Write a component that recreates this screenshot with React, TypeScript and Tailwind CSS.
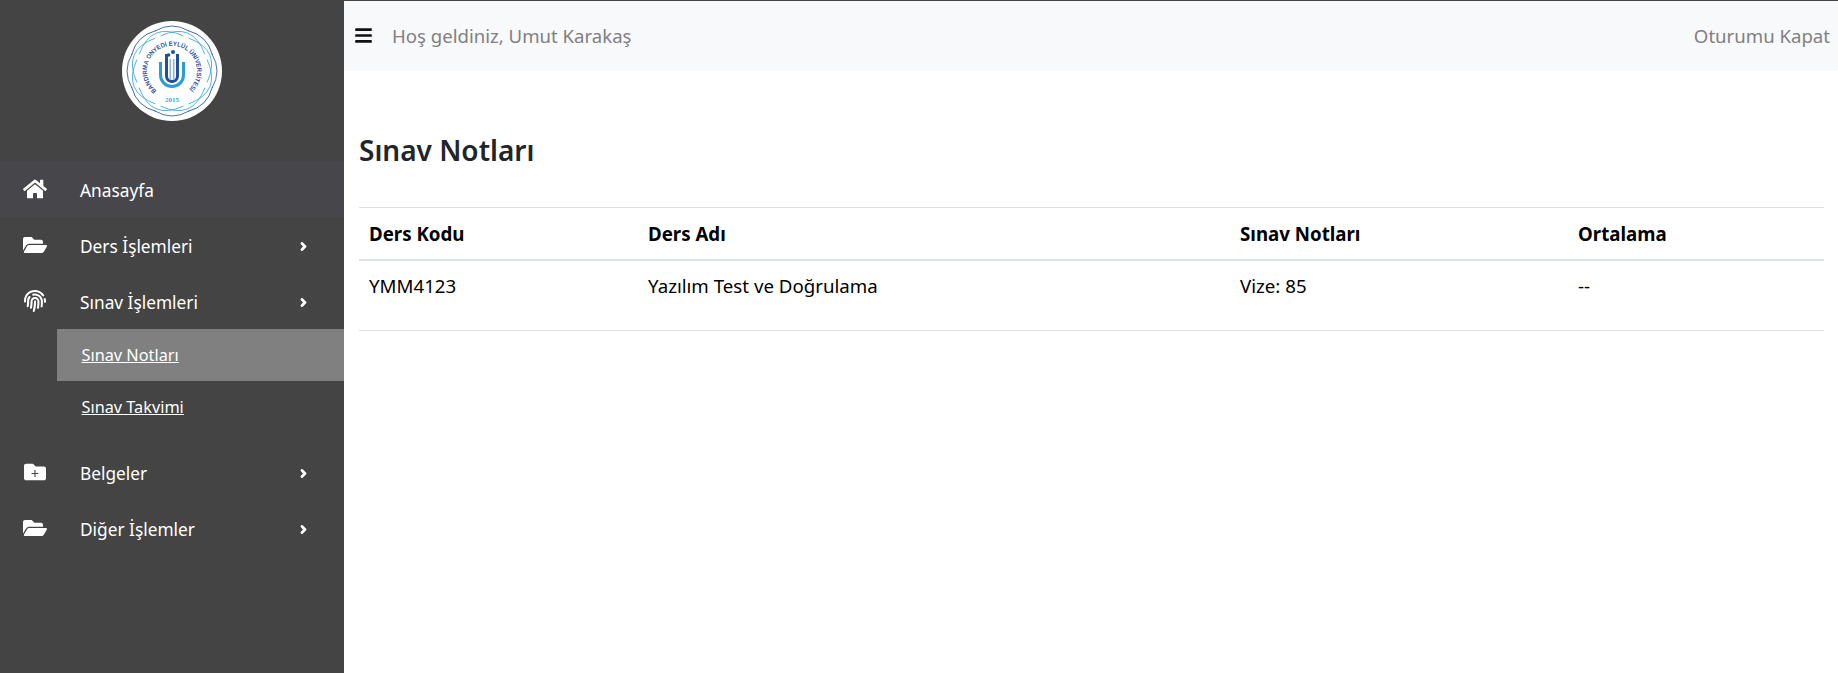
import React from 'react';
import { FaHome, FaFolderOpen, FaFingerprint, FaChevronRight, FaBars } from 'react-icons/fa';

const Logo = () => {
  const petals = Array.from({ length: 8 }, (_, i) => i * 45);
  return (
    <svg viewBox="0 0 100 100" className="h-[100px] w-[100px]">
      <defs>
        <path id="ring" d="M34.6 69.5 A25 25 0 1 1 65.4 69.5" />
      </defs>
      <circle cx="50" cy="50" r="50" fill="#fff" />
      {petals.map((a) => (
        <g key={a} fill="none">
          <path d="M33 10 Q50 0 67 10" stroke="#1f4e9c" strokeWidth="0.8" transform={`rotate(${a} 50 50)`} />
          <path d="M26 22 Q50 -4 74 22" stroke="#3fa9e0" strokeWidth="0.8" transform={`rotate(${a + 22.5} 50 50)`} />
        </g>
      ))}
      <text fontSize="6.4" fontWeight="700" fill="#1f4e9c" fontFamily="'Liberation Sans', sans-serif">
        <textPath href="#ring" textLength="121" lengthAdjust="spacingAndGlyphs">BANDIRMA ONYEDİ EYLÜL ÜNİVERSİTESİ</textPath>
      </text>
      <path d="M37 41 V54 A13 13 0 0 0 63 54 V41 H60 V54 A10 10 0 0 1 40 54 V41 Z" fill="#2b9bd8" />
      <path d="M43 33 V55 A7 7 0 0 0 57 55 V33 H54 V55 A4 4 0 0 1 46 55 V33 Z" fill="#1f4e9c" />
      <rect x="47.5" y="38" width="1.6" height="21" fill="#8fb4d8" />
      <rect x="50.9" y="38" width="1.6" height="21" fill="#8fb4d8" />
      <circle cx="46.5" cy="34" r="1.8" fill="#1f4e9c" />
      <circle cx="51" cy="31" r="2" fill="#1f4e9c" />
      <text x="50" y="81" textAnchor="middle" fontSize="7" fontWeight="700" fill="#3fa9e0" fontFamily="'Liberation Serif', serif">2015</text>
    </svg>
  );
};

// thinner plus than the react-icons folder-plus
const FolderPlus = () => (
  <svg viewBox="0 0 512 512" className="h-[22px] w-[22px]" fill="currentColor">
    <path d="M464 128H272l-64-64H48C21.49 64 0 85.49 0 112v288c0 26.51 21.49 48 48 48h416c26.51 0 48-21.49 48-48V176c0-26.51-21.49-48-48-48z" />
    <path d="M256 210v160M176 290h160" stroke="#444444" strokeWidth="26" />
  </svg>
);

const NavItem = ({ icon, label, arrow, active }: { icon: React.ReactNode; label: string; arrow?: boolean; active?: boolean }) => (
  <a className={`flex h-14 items-center text-white ${active ? 'bg-[#47474b]' : ''}`}>
    <span className="flex w-[80px] shrink-0 justify-center pr-[11px] text-[24px]">{icon}</span>
    <span className="flex-1 pt-[3px] text-[17.3px]">{label}</span>
    {arrow && <FaChevronRight className="mr-[36px] mt-[2px] text-[9px]" stroke="currentColor" strokeWidth={70} />}
  </a>
);

const SubItem = ({ label, active }: { label: string; active?: boolean }) => (
  <a className={`ml-[57px] flex h-[52px] items-center pl-[24.5px] text-[16.3px] text-white underline ${active ? 'bg-[#808080]' : ''}`}>
    {label}
  </a>
);

const App = () => {
  return (
    <div className="flex h-screen overflow-hidden bg-white font-['Noto_Sans',sans-serif]">
      {/* Sidebar */}
      <aside className="w-[344px] shrink-0 bg-[#444444]">
        <div className="flex h-[161px] justify-center pt-[21px]">
          <Logo />
        </div>
        <nav>
          <NavItem icon={<FaHome />} label="Anasayfa" active />
          <NavItem icon={<FaFolderOpen />} label="Ders İşlemleri" arrow />
          <NavItem icon={<FaFingerprint className="text-[22px]" />} label="Sınav İşlemleri" arrow />
          <SubItem label="Sınav Notları" active />
          <SubItem label="Sınav Takvimi" />
          <div className="h-[11px]" />
          <NavItem icon={<FolderPlus />} label="Belgeler" arrow />
          <NavItem icon={<FaFolderOpen />} label="Diğer İşlemler" arrow />
        </nav>
      </aside>

      {/* Main */}
      <main className="min-w-0 flex-1">
        <header className="flex h-[71px] items-center justify-between border-t border-[#444444] bg-[#f8f9fa] pl-[10px] pr-[8px] text-[18.6px] text-[#808080]">
          <div className="flex items-center">
            <FaBars className="text-[19px] text-[#111111]" />
            <span className="ml-[19px]">Hoş geldiniz, Umut Karakaş</span>
          </div>
          <span>Oturumu Kapat</span>
        </header>

        <div className="pl-[15px] pr-[14px]">
          <h2 className="mt-[58px] h-[78px] text-[28px] font-semibold text-[#212529]">Sınav Notları</h2>
          <table className="w-full table-fixed border-collapse text-left text-[18.7px] text-black">
            <thead>
              <tr className="h-[52px] border-y border-[#dee2e6] text-[18.7px]">
                <th className="w-[279px] px-[10px] pt-[2px] font-bold">Ders Kodu</th>
                <th className="w-[592px] px-[10px] pt-[2px] font-bold">Ders Adı</th>
                <th className="w-[338px] px-[10px] pt-[2px] font-bold">Sınav Notları</th>
                <th className="px-[10px] pt-[2px] font-bold">Ortalama</th>
              </tr>
            </thead>
            <tbody>
              <tr className="h-[71px] border-t-2 border-b border-t-[#dee2e6] border-b-[#dee2e6]">
                <td className="px-[10px] pb-[18px]">YMM4123</td>
                <td className="px-[10px] pb-[18px]">Yazılım Test ve Doğrulama</td>
                <td className="px-[10px] pb-[18px]">Vize: 85</td>
                <td className="px-[10px] pb-[18px]">--</td>
              </tr>
            </tbody>
          </table>
        </div>
      </main>
    </div>
  );
};

export default App;
